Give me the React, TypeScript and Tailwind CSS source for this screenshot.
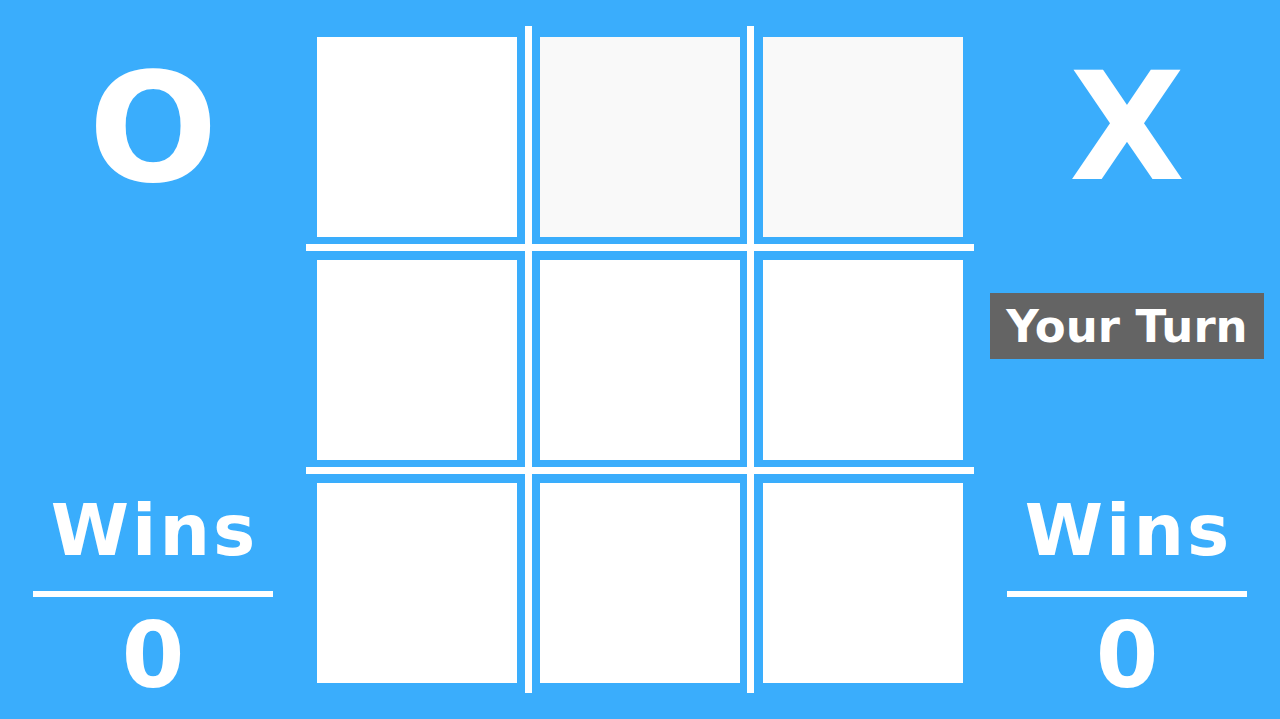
import { useState } from 'react'

type Mark = 'O' | 'X' | null

const font = { fontFamily: '"DejaVu Sans", "Liberation Sans", sans-serif' }

function Score({ wins }: { wins: number }) {
  return (
    <>
      <div className="w-[240px] h-[6px] bg-white mt-[25px]" />
      <div className="text-[90px] leading-none font-bold text-white mt-[14px]">{wins}</div>
    </>
  )
}

export default function App() {
  const [cells, setCells] = useState<Mark[]>(Array(9).fill(null))

  return (
    <div
      className="w-[1280px] h-[719px] bg-[#3aadfc] flex items-center overflow-hidden select-none"
      style={font}
    >
      {/* player O */}
      <div className="w-[306px] h-full flex flex-col items-center">
        <div className="text-[152px] leading-none font-bold text-white mt-[53px]">O</div>
        <div className="text-[71px] leading-none font-bold text-white tracking-[3px] pl-[3px] mt-[290px]">Wins</div>
        <Score wins={0} />
      </div>

      {/* board */}
      <div className="relative w-[668px] h-[667px] p-[11px]">
        <div className="grid grid-cols-[repeat(3,200px)] grid-rows-[repeat(3,200px)] gap-[23px]">
          {cells.map((c, i) => (
            <button
              key={i}
              onClick={() =>
                setCells((prev) => prev.map((v, j) => (j === i && !v ? 'X' : v)))
              }
              className={`flex items-center justify-center text-[140px] font-bold text-[#3aadfc] ${
                i === 1 || i === 2 ? 'bg-[#f9f9f9]' : 'bg-white'
              }`}
            >
              {c}
            </button>
          ))}
        </div>
        {/* grid lines */}
        <div className="absolute top-0 bottom-0 left-[219px] w-[7px] bg-white" />
        <div className="absolute top-0 bottom-0 left-[441px] w-[7px] bg-white" />
        <div className="absolute left-0 right-0 top-[218px] h-[7px] bg-white" />
        <div className="absolute left-0 right-0 top-[441px] h-[7px] bg-white" />
      </div>

      {/* player X */}
      <div className="w-[306px] h-full flex flex-col items-center">
        <div className="text-[150px] leading-none font-bold text-white mt-[52px]">X</div>
        <div className="w-[274px] h-[66px] bg-[#646464] mt-[91px] flex items-center justify-center">
          <span className="text-[45px] leading-none font-bold text-white">Your Turn</span>
        </div>
        <div className="text-[71px] leading-none font-bold text-white tracking-[3px] pl-[3px] mt-[136px]">Wins</div>
        <Score wins={0} />
      </div>
    </div>
  )
}
